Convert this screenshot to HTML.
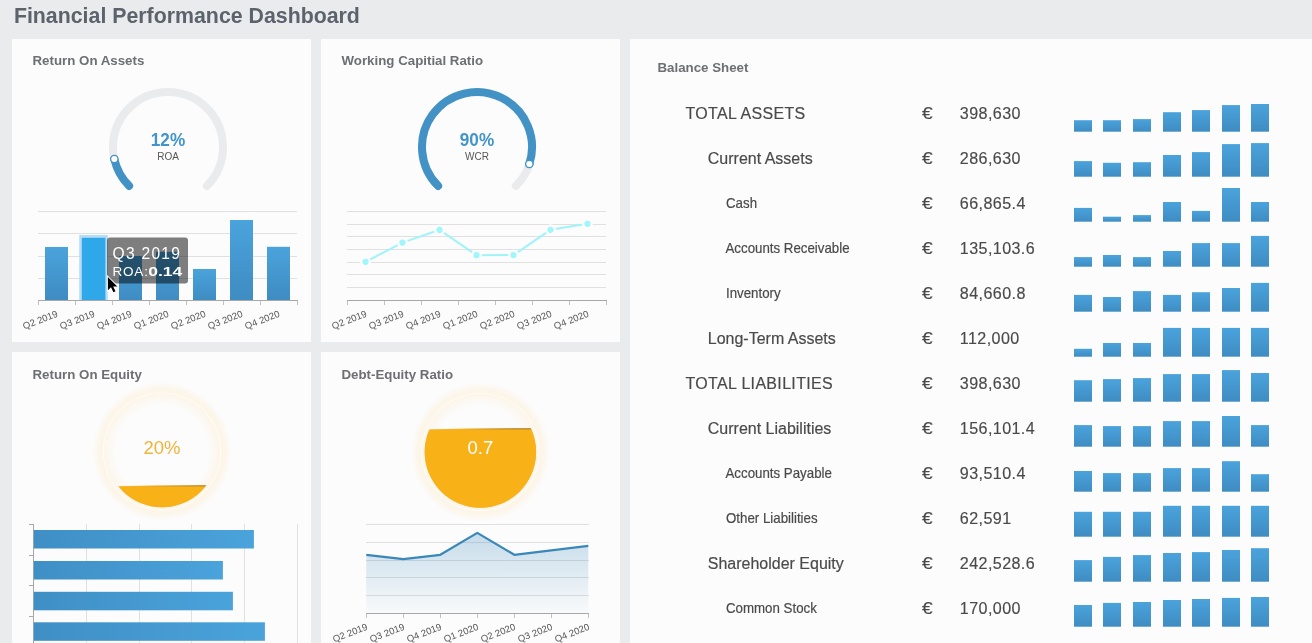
<!DOCTYPE html><html><head><meta charset="utf-8"><style>
html,body{margin:0;padding:0;width:1312px;height:643px;overflow:hidden;background:#eaebed;}
svg{position:absolute;left:0;top:0;will-change:transform;}
text{font-family:"Liberation Sans",sans-serif;}
</style></head><body>
<svg width="1312" height="643" viewBox="0 0 1312 643">
<defs>
<linearGradient id="gv" x1="0" y1="0" x2="0" y2="1"><stop offset="0" stop-color="#4ba3dc"/><stop offset="1" stop-color="#3e8cc2"/></linearGradient>
<linearGradient id="gh" x1="0" y1="0" x2="1" y2="0"><stop offset="0" stop-color="#3f8fc5"/><stop offset="1" stop-color="#4aa3db"/></linearGradient>
<linearGradient id="garea" x1="0" y1="0" x2="0" y2="1"><stop offset="0" stop-color="#3a87b9" stop-opacity="0.28"/><stop offset="1" stop-color="#3a87b9" stop-opacity="0.02"/></linearGradient>
<filter id="blur2" x="-20%" y="-20%" width="140%" height="140%"><feGaussianBlur stdDeviation="2"/></filter>
</defs>

<text x="13.9" y="22.9" font-size="21.8" font-weight="bold" fill="#5c636d" textLength="346" lengthAdjust="spacingAndGlyphs">Financial Performance Dashboard</text>
<rect x="12" y="39" width="299" height="303" fill="#fcfcfc"/>
<rect x="321" y="39" width="299" height="303" fill="#fcfcfc"/>
<rect x="12" y="352" width="299" height="300" fill="#fcfcfc"/>
<rect x="321" y="352" width="299" height="300" fill="#fcfcfc"/>
<rect x="630" y="39" width="700" height="620" fill="#fcfcfc"/>
<text x="32.5" y="64.8" font-size="13.3" font-weight="bold" fill="#6e6f73">Return On Assets</text>
<text x="341.5" y="65.3" font-size="13.3" font-weight="bold" fill="#6e6f73">Working Capitial Ratio</text>
<text x="32.5" y="379" font-size="13.3" font-weight="bold" fill="#6e6f73">Return On Equity</text>
<text x="341.5" y="379" font-size="13.3" font-weight="bold" fill="#6e6f73">Debt-Equity Ratio</text>
<text x="657.5" y="72" font-size="13.3" font-weight="bold" fill="#6e6f73">Balance Sheet</text>
<path d="M129.11,185.89 A55,55 0 1 1 206.89,185.89" fill="none" stroke="#eaebed" stroke-width="8" stroke-linecap="round"/>
<path d="M129.11,185.89 A55,55 0 0 1 114.32,159.00" fill="none" stroke="#4292c6" stroke-width="8" stroke-linecap="round"/>
<circle cx="114.32" cy="159.00" r="3.7" fill="#fff" stroke="#4292c6" stroke-width="1.3"/>
<text x="168" y="145.8" font-size="17.6" font-weight="bold" fill="#4394c9" text-anchor="middle" textLength="34.4" lengthAdjust="spacingAndGlyphs">12%</text>
<text x="168" y="159.5" font-size="10" fill="#555" text-anchor="middle">ROA</text>
<path d="M438.11,185.89 A55,55 0 1 1 515.89,185.89" fill="none" stroke="#eaebed" stroke-width="8" stroke-linecap="round"/>
<path d="M438.11,185.89 A55,55 0 1 1 529.31,164.00" fill="none" stroke="#4292c6" stroke-width="8" stroke-linecap="round"/>
<circle cx="529.31" cy="164.00" r="3.7" fill="#fff" stroke="#4292c6" stroke-width="1.3"/>
<text x="477" y="145.8" font-size="17.6" font-weight="bold" fill="#4394c9" text-anchor="middle" textLength="34.4" lengthAdjust="spacingAndGlyphs">90%</text>
<text x="477" y="159.5" font-size="10" fill="#555" text-anchor="middle">WCR</text>
<line x1="38" x2="297" y1="211.5" y2="211.5" stroke="#e0e0e0" stroke-width="1"/>
<line x1="38" x2="297" y1="233.5" y2="233.5" stroke="#e0e0e0" stroke-width="1"/>
<line x1="38" x2="297" y1="256.5" y2="256.5" stroke="#e0e0e0" stroke-width="1"/>
<line x1="38" x2="297" y1="278.5" y2="278.5" stroke="#e0e0e0" stroke-width="1"/>
<line x1="38" x2="298" y1="300.5" y2="300.5" stroke="#a8a8a8" stroke-width="1"/>
<line x1="38.5" x2="38.5" y1="301" y2="305" stroke="#c2c2c2" stroke-width="1"/>
<line x1="75.5" x2="75.5" y1="301" y2="305" stroke="#c2c2c2" stroke-width="1"/>
<line x1="112.5" x2="112.5" y1="301" y2="305" stroke="#c2c2c2" stroke-width="1"/>
<line x1="149.5" x2="149.5" y1="301" y2="305" stroke="#c2c2c2" stroke-width="1"/>
<line x1="186.5" x2="186.5" y1="301" y2="305" stroke="#c2c2c2" stroke-width="1"/>
<line x1="223.5" x2="223.5" y1="301" y2="305" stroke="#c2c2c2" stroke-width="1"/>
<line x1="260.5" x2="260.5" y1="301" y2="305" stroke="#c2c2c2" stroke-width="1"/>
<line x1="297.5" x2="297.5" y1="301" y2="305" stroke="#c2c2c2" stroke-width="1"/>
<rect x="45" y="247" width="23" height="53" fill="url(#gv)"/>
<rect x="79.2" y="235" width="28.6" height="65" fill="#b6ddf5"/>
<rect x="81.8" y="237.8" width="23.6" height="62.19999999999999" fill="#2fa8ea"/>
<rect x="119" y="256" width="23" height="44" fill="url(#gv)"/>
<rect x="156" y="251.8" width="23" height="48.19999999999999" fill="url(#gv)"/>
<rect x="193" y="269" width="23" height="31" fill="url(#gv)"/>
<rect x="230" y="220" width="23" height="80" fill="url(#gv)"/>
<rect x="267" y="246.8" width="23" height="53.19999999999999" fill="url(#gv)"/>
<text x="0" y="0" font-size="9.5" fill="#555" text-anchor="end" transform="translate(56.0,310.1) rotate(-21)" dy="0.7em">Q2 2019</text>
<text x="0" y="0" font-size="9.5" fill="#555" text-anchor="end" transform="translate(93.0,310.1) rotate(-21)" dy="0.7em">Q3 2019</text>
<text x="0" y="0" font-size="9.5" fill="#555" text-anchor="end" transform="translate(130.0,310.1) rotate(-21)" dy="0.7em">Q4 2019</text>
<text x="0" y="0" font-size="9.5" fill="#555" text-anchor="end" transform="translate(167.0,310.1) rotate(-21)" dy="0.7em">Q1 2020</text>
<text x="0" y="0" font-size="9.5" fill="#555" text-anchor="end" transform="translate(204.0,310.1) rotate(-21)" dy="0.7em">Q2 2020</text>
<text x="0" y="0" font-size="9.5" fill="#555" text-anchor="end" transform="translate(241.0,310.1) rotate(-21)" dy="0.7em">Q3 2020</text>
<text x="0" y="0" font-size="9.5" fill="#555" text-anchor="end" transform="translate(278.0,310.1) rotate(-21)" dy="0.7em">Q4 2020</text>
<line x1="347" x2="606" y1="211.5" y2="211.5" stroke="#e0e0e0" stroke-width="1"/>
<line x1="347" x2="606" y1="224.5" y2="224.5" stroke="#e0e0e0" stroke-width="1"/>
<line x1="347" x2="606" y1="236.5" y2="236.5" stroke="#e0e0e0" stroke-width="1"/>
<line x1="347" x2="606" y1="249.5" y2="249.5" stroke="#e0e0e0" stroke-width="1"/>
<line x1="347" x2="606" y1="262.5" y2="262.5" stroke="#e0e0e0" stroke-width="1"/>
<line x1="347" x2="606" y1="274.5" y2="274.5" stroke="#e0e0e0" stroke-width="1"/>
<line x1="347" x2="606" y1="287.5" y2="287.5" stroke="#e0e0e0" stroke-width="1"/>
<line x1="347" x2="607" y1="300.5" y2="300.5" stroke="#a8a8a8" stroke-width="1"/>
<line x1="347.5" x2="347.5" y1="301" y2="305" stroke="#c2c2c2" stroke-width="1"/>
<line x1="384.5" x2="384.5" y1="301" y2="305" stroke="#c2c2c2" stroke-width="1"/>
<line x1="421.5" x2="421.5" y1="301" y2="305" stroke="#c2c2c2" stroke-width="1"/>
<line x1="458.5" x2="458.5" y1="301" y2="305" stroke="#c2c2c2" stroke-width="1"/>
<line x1="495.5" x2="495.5" y1="301" y2="305" stroke="#c2c2c2" stroke-width="1"/>
<line x1="532.5" x2="532.5" y1="301" y2="305" stroke="#c2c2c2" stroke-width="1"/>
<line x1="569.5" x2="569.5" y1="301" y2="305" stroke="#c2c2c2" stroke-width="1"/>
<line x1="606.5" x2="606.5" y1="301" y2="305" stroke="#c2c2c2" stroke-width="1"/>
<polyline points="365.5,261.8 402.5,242.6 439.5,229.9 476.5,255.2 513.5,255.1 550.5,229.8 587.5,223.8" fill="none" stroke="#a0f3f9" stroke-width="2"/>
<circle cx="365.5" cy="261.8" r="4.3" fill="#9ff6fb" stroke="#fcfcfc" stroke-width="2.4"/>
<circle cx="402.5" cy="242.6" r="4.3" fill="#9ff6fb" stroke="#fcfcfc" stroke-width="2.4"/>
<circle cx="439.5" cy="229.9" r="4.3" fill="#9ff6fb" stroke="#fcfcfc" stroke-width="2.4"/>
<circle cx="476.5" cy="255.2" r="4.3" fill="#9ff6fb" stroke="#fcfcfc" stroke-width="2.4"/>
<circle cx="513.5" cy="255.1" r="4.3" fill="#9ff6fb" stroke="#fcfcfc" stroke-width="2.4"/>
<circle cx="550.5" cy="229.8" r="4.3" fill="#9ff6fb" stroke="#fcfcfc" stroke-width="2.4"/>
<circle cx="587.5" cy="223.8" r="4.3" fill="#9ff6fb" stroke="#fcfcfc" stroke-width="2.4"/>
<text x="0" y="0" font-size="9.5" fill="#555" text-anchor="end" transform="translate(365.0,310.1) rotate(-21)" dy="0.7em">Q2 2019</text>
<text x="0" y="0" font-size="9.5" fill="#555" text-anchor="end" transform="translate(402.0,310.1) rotate(-21)" dy="0.7em">Q3 2019</text>
<text x="0" y="0" font-size="9.5" fill="#555" text-anchor="end" transform="translate(439.0,310.1) rotate(-21)" dy="0.7em">Q4 2019</text>
<text x="0" y="0" font-size="9.5" fill="#555" text-anchor="end" transform="translate(476.0,310.1) rotate(-21)" dy="0.7em">Q1 2020</text>
<text x="0" y="0" font-size="9.5" fill="#555" text-anchor="end" transform="translate(513.0,310.1) rotate(-21)" dy="0.7em">Q2 2020</text>
<text x="0" y="0" font-size="9.5" fill="#555" text-anchor="end" transform="translate(550.0,310.1) rotate(-21)" dy="0.7em">Q3 2020</text>
<text x="0" y="0" font-size="9.5" fill="#555" text-anchor="end" transform="translate(587.0,310.1) rotate(-21)" dy="0.7em">Q4 2020</text>
<radialGradient id="rg162" cx="162" cy="451.5" r="70" gradientUnits="userSpaceOnUse"><stop offset="0.66" stop-color="#fde9c8" stop-opacity="0"/><stop offset="0.76" stop-color="#fde9c8" stop-opacity="0.2"/><stop offset="0.815" stop-color="#fde9c8" stop-opacity="0.32"/><stop offset="0.838" stop-color="#fffdf8" stop-opacity="1"/><stop offset="0.86" stop-color="#fde9c8" stop-opacity="0.36"/><stop offset="0.9" stop-color="#fde9c8" stop-opacity="0.34"/><stop offset="0.99" stop-color="#fde9c8" stop-opacity="0"/></radialGradient>
<circle cx="162" cy="451.5" r="70" fill="url(#rg162)"/>
<clipPath id="c162"><circle cx="162" cy="451.5" r="55.7"/></clipPath>
<g clip-path="url(#c162)"><path d="M102,486.6 Q162,485 222,485.4 L222,511.5 L102,511.5 Z" fill="#f5ac1d" opacity="0.9"/>
<path d="M102,487.1 Q162,486 222,485.9 L222,511.5 L102,511.5 Z" fill="#f8b117"/></g>
<linearGradient id="wl162" x1="142" x2="218" y1="0" y2="0" gradientUnits="userSpaceOnUse"><stop offset="0" stop-color="#a87a30" stop-opacity="0"/><stop offset="1" stop-color="#a87a30" stop-opacity="0.8"/></linearGradient>
<path d="M142,486.6 Q182,485.7 220,485.8" fill="none" stroke="url(#wl162)" stroke-width="1.6" clip-path="url(#c162)"/>
<text x="162" y="453.7" font-size="18.5" fill="#f2b33a" text-anchor="middle">20%</text>
<radialGradient id="rg480" cx="480.4" cy="452" r="70" gradientUnits="userSpaceOnUse"><stop offset="0.66" stop-color="#fde9c8" stop-opacity="0"/><stop offset="0.76" stop-color="#fde9c8" stop-opacity="0.2"/><stop offset="0.815" stop-color="#fde9c8" stop-opacity="0.32"/><stop offset="0.838" stop-color="#fffdf8" stop-opacity="1"/><stop offset="0.86" stop-color="#fde9c8" stop-opacity="0.36"/><stop offset="0.9" stop-color="#fde9c8" stop-opacity="0.34"/><stop offset="0.99" stop-color="#fde9c8" stop-opacity="0"/></radialGradient>
<circle cx="480.4" cy="452" r="70" fill="url(#rg480)"/>
<clipPath id="c480.4"><circle cx="480.4" cy="452" r="55.7"/></clipPath>
<g clip-path="url(#c480.4)"><path d="M420.4,429.6 Q480.4,428 540.4,428.4 L540.4,512 L420.4,512 Z" fill="#f5ac1d" opacity="0.9"/>
<path d="M420.4,430.1 Q480.4,429 540.4,428.9 L540.4,512 L420.4,512 Z" fill="#f8b117"/></g>
<linearGradient id="wl480" x1="460.4" x2="536.4" y1="0" y2="0" gradientUnits="userSpaceOnUse"><stop offset="0" stop-color="#a87a30" stop-opacity="0"/><stop offset="1" stop-color="#a87a30" stop-opacity="0.8"/></linearGradient>
<path d="M460.4,429.6 Q500.4,428.7 538.4,428.8" fill="none" stroke="url(#wl480)" stroke-width="1.6" clip-path="url(#c480.4)"/>
<text x="480.4" y="453.7" font-size="18.5" fill="#ffffff" text-anchor="middle">0.7</text>
<line x1="86.5" x2="86.5" y1="524" y2="643" stroke="#e0e0e0" stroke-width="1"/>
<line x1="139.5" x2="139.5" y1="524" y2="643" stroke="#e0e0e0" stroke-width="1"/>
<line x1="191.5" x2="191.5" y1="524" y2="643" stroke="#e0e0e0" stroke-width="1"/>
<line x1="244.5" x2="244.5" y1="524" y2="643" stroke="#e0e0e0" stroke-width="1"/>
<line x1="297.5" x2="297.5" y1="524" y2="643" stroke="#e0e0e0" stroke-width="1"/>
<line x1="33.5" x2="33.5" y1="524" y2="643" stroke="#a8a8a8" stroke-width="1"/>
<line x1="29" x2="34" y1="524.5" y2="524.5" stroke="#a8a8a8" stroke-width="1"/>
<line x1="29" x2="34" y1="555.5" y2="555.5" stroke="#a8a8a8" stroke-width="1"/>
<line x1="29" x2="34" y1="585.5" y2="585.5" stroke="#a8a8a8" stroke-width="1"/>
<line x1="29" x2="34" y1="616.5" y2="616.5" stroke="#a8a8a8" stroke-width="1"/>
<rect x="33.8" y="530" width="220.10000000000002" height="18.5" fill="url(#gh)"/>
<rect x="33.8" y="561" width="189.10000000000002" height="18.5" fill="url(#gh)"/>
<rect x="33.8" y="591.8" width="199.10000000000002" height="18.5" fill="url(#gh)"/>
<rect x="33.8" y="622.3" width="231.09999999999997" height="18.5" fill="url(#gh)"/>
<line x1="366" x2="589" y1="524.5" y2="524.5" stroke="#e0e0e0" stroke-width="1"/>
<line x1="366" x2="589" y1="542.5" y2="542.5" stroke="#e0e0e0" stroke-width="1"/>
<line x1="366" x2="589" y1="560.5" y2="560.5" stroke="#e0e0e0" stroke-width="1"/>
<line x1="366" x2="589" y1="577.5" y2="577.5" stroke="#e0e0e0" stroke-width="1"/>
<line x1="366" x2="589" y1="595.5" y2="595.5" stroke="#e0e0e0" stroke-width="1"/>
<line x1="366" x2="589" y1="613.5" y2="613.5" stroke="#a8a8a8" stroke-width="1"/>
<line x1="366.5" x2="366.5" y1="614" y2="618" stroke="#c2c2c2" stroke-width="1"/>
<line x1="403.5" x2="403.5" y1="614" y2="618" stroke="#c2c2c2" stroke-width="1"/>
<line x1="440.5" x2="440.5" y1="614" y2="618" stroke="#c2c2c2" stroke-width="1"/>
<line x1="477.5" x2="477.5" y1="614" y2="618" stroke="#c2c2c2" stroke-width="1"/>
<line x1="514.5" x2="514.5" y1="614" y2="618" stroke="#c2c2c2" stroke-width="1"/>
<line x1="551.5" x2="551.5" y1="614" y2="618" stroke="#c2c2c2" stroke-width="1"/>
<line x1="588.5" x2="588.5" y1="614" y2="618" stroke="#c2c2c2" stroke-width="1"/>
<path d="M366.3,554.8 L403.3,559.2 L440.3,554.8 L477.3,532.9 L514.3,554.8 L551.3,550.4 L588.3,545.9 L588.3,613 L366.3,613 Z" fill="url(#garea)"/>
<polyline points="366.3,554.8 403.3,559.2 440.3,554.8 477.3,532.9 514.3,554.8 551.3,550.4 588.3,545.9" fill="none" stroke="#3a87b9" stroke-width="2.2" stroke-linejoin="round"/>
<text x="0" y="0" font-size="9.5" fill="#555" text-anchor="end" transform="translate(365.8,623.1) rotate(-21)" dy="0.7em">Q2 2019</text>
<text x="0" y="0" font-size="9.5" fill="#555" text-anchor="end" transform="translate(402.8,623.1) rotate(-21)" dy="0.7em">Q3 2019</text>
<text x="0" y="0" font-size="9.5" fill="#555" text-anchor="end" transform="translate(439.8,623.1) rotate(-21)" dy="0.7em">Q4 2019</text>
<text x="0" y="0" font-size="9.5" fill="#555" text-anchor="end" transform="translate(476.8,623.1) rotate(-21)" dy="0.7em">Q1 2020</text>
<text x="0" y="0" font-size="9.5" fill="#555" text-anchor="end" transform="translate(513.8,623.1) rotate(-21)" dy="0.7em">Q2 2020</text>
<text x="0" y="0" font-size="9.5" fill="#555" text-anchor="end" transform="translate(550.8,623.1) rotate(-21)" dy="0.7em">Q3 2020</text>
<text x="0" y="0" font-size="9.5" fill="#555" text-anchor="end" transform="translate(587.8,623.1) rotate(-21)" dy="0.7em">Q4 2020</text>
<rect x="107" y="237.5" width="81" height="46" rx="3" fill="rgba(0,0,0,0.5)"/>
<text x="112.5" y="258.8" font-size="15.6" fill="#fff" textLength="67.5" lengthAdjust="spacing">Q3 2019</text>
<text x="112.5" y="275.7" font-size="13.5" fill="#fff" textLength="35.4" lengthAdjust="spacing">ROA:</text>
<text x="148.2" y="275.7" font-size="13.6" font-weight="bold" fill="#fff" textLength="34.2" lengthAdjust="spacingAndGlyphs">0.14</text>
<path d="M107.90,277.00 L107.90,290.20 L111.00,287.20 L113.40,292.20 L115.50,291.30 L113.20,286.50 L117.30,286.50 Z" fill="#000" stroke="#fff" stroke-width="1.7" stroke-linejoin="miter" paint-order="stroke"/>
<text x="0" y="0" font-size="16" fill="#4a4a4a" stroke="#4a4a4a" stroke-width="0.18" letter-spacing="0.33" transform="translate(685.5,119.0) scale(1,1.04)">TOTAL ASSETS</text>
<text x="0" y="0" font-size="16" fill="#4a4a4a" stroke="#4a4a4a" stroke-width="0.15" transform="translate(922,118.6) scale(1.2,1)">€</text>
<text x="0" y="0" font-size="16.1" fill="#4a4a4a" stroke="#4a4a4a" stroke-width="0.15" letter-spacing="0.42" transform="translate(959.8,118.6) scale(1,1.04)">398,630</text>
<rect x="1074" y="120.2" width="18" height="11.5" fill="url(#gv)"/>
<rect x="1103" y="120.2" width="18" height="11.5" fill="url(#gv)"/>
<rect x="1133" y="119.1" width="18" height="12.6" fill="url(#gv)"/>
<rect x="1163" y="112.2" width="18" height="19.5" fill="url(#gv)"/>
<rect x="1192" y="110.1" width="18" height="21.6" fill="url(#gv)"/>
<rect x="1222" y="105.1" width="18" height="26.6" fill="url(#gv)"/>
<rect x="1251" y="104" width="18" height="27.7" fill="url(#gv)"/>
<text x="0" y="0" font-size="16" fill="#4a4a4a" stroke="#4a4a4a" stroke-width="0.18" transform="translate(707.8,164.0) scale(1,1.04)">Current Assets</text>
<text x="0" y="0" font-size="16" fill="#4a4a4a" stroke="#4a4a4a" stroke-width="0.15" transform="translate(922,163.6) scale(1.2,1)">€</text>
<text x="0" y="0" font-size="16.1" fill="#4a4a4a" stroke="#4a4a4a" stroke-width="0.15" letter-spacing="0.42" transform="translate(959.8,163.6) scale(1,1.04)">286,630</text>
<rect x="1074" y="161.1" width="18" height="15.6" fill="url(#gv)"/>
<rect x="1103" y="162.8" width="18" height="13.9" fill="url(#gv)"/>
<rect x="1133" y="162.2" width="18" height="14.5" fill="url(#gv)"/>
<rect x="1163" y="155" width="18" height="21.7" fill="url(#gv)"/>
<rect x="1192" y="152.1" width="18" height="24.6" fill="url(#gv)"/>
<rect x="1222" y="144.1" width="18" height="32.6" fill="url(#gv)"/>
<rect x="1251" y="143.1" width="18" height="33.6" fill="url(#gv)"/>
<text x="0" y="0" font-size="13.3" fill="#4a4a4a" stroke="#4a4a4a" stroke-width="0.18" transform="translate(726,208.0) scale(1,1.08)">Cash</text>
<text x="0" y="0" font-size="16" fill="#4a4a4a" stroke="#4a4a4a" stroke-width="0.15" transform="translate(922,208.6) scale(1.2,1)">€</text>
<text x="0" y="0" font-size="16.1" fill="#4a4a4a" stroke="#4a4a4a" stroke-width="0.15" letter-spacing="0.42" transform="translate(959.8,208.6) scale(1,1.04)">66,865.4</text>
<rect x="1074" y="207.9" width="18" height="13.8" fill="url(#gv)"/>
<rect x="1103" y="216.7" width="18" height="5.0" fill="url(#gv)"/>
<rect x="1133" y="215.1" width="18" height="6.6" fill="url(#gv)"/>
<rect x="1163" y="202" width="18" height="19.7" fill="url(#gv)"/>
<rect x="1192" y="210.9" width="18" height="10.8" fill="url(#gv)"/>
<rect x="1222" y="188" width="18" height="33.7" fill="url(#gv)"/>
<rect x="1251" y="202" width="18" height="19.7" fill="url(#gv)"/>
<text x="0" y="0" font-size="13.3" fill="#4a4a4a" stroke="#4a4a4a" stroke-width="0.18" transform="translate(725.5,253.0) scale(1,1.08)">Accounts Receivable</text>
<text x="0" y="0" font-size="16" fill="#4a4a4a" stroke="#4a4a4a" stroke-width="0.15" transform="translate(922,253.6) scale(1.2,1)">€</text>
<text x="0" y="0" font-size="16.1" fill="#4a4a4a" stroke="#4a4a4a" stroke-width="0.15" letter-spacing="0.42" transform="translate(959.8,253.6) scale(1,1.04)">135,103.6</text>
<rect x="1074" y="257.1" width="18" height="9.6" fill="url(#gv)"/>
<rect x="1103" y="255" width="18" height="11.7" fill="url(#gv)"/>
<rect x="1133" y="257.1" width="18" height="9.6" fill="url(#gv)"/>
<rect x="1163" y="251" width="18" height="15.7" fill="url(#gv)"/>
<rect x="1192" y="243.1" width="18" height="23.6" fill="url(#gv)"/>
<rect x="1222" y="243.1" width="18" height="23.6" fill="url(#gv)"/>
<rect x="1251" y="235.9" width="18" height="30.8" fill="url(#gv)"/>
<text x="0" y="0" font-size="13.3" fill="#4a4a4a" stroke="#4a4a4a" stroke-width="0.18" transform="translate(726,298.0) scale(1,1.08)">Inventory</text>
<text x="0" y="0" font-size="16" fill="#4a4a4a" stroke="#4a4a4a" stroke-width="0.15" transform="translate(922,298.6) scale(1.2,1)">€</text>
<text x="0" y="0" font-size="16.1" fill="#4a4a4a" stroke="#4a4a4a" stroke-width="0.15" letter-spacing="0.42" transform="translate(959.8,298.6) scale(1,1.04)">84,660.8</text>
<rect x="1074" y="294.9" width="18" height="16.8" fill="url(#gv)"/>
<rect x="1103" y="297" width="18" height="14.7" fill="url(#gv)"/>
<rect x="1133" y="291.1" width="18" height="20.6" fill="url(#gv)"/>
<rect x="1163" y="294.9" width="18" height="16.8" fill="url(#gv)"/>
<rect x="1192" y="292.2" width="18" height="19.5" fill="url(#gv)"/>
<rect x="1222" y="288" width="18" height="23.7" fill="url(#gv)"/>
<rect x="1251" y="282.9" width="18" height="28.8" fill="url(#gv)"/>
<text x="0" y="0" font-size="16" fill="#4a4a4a" stroke="#4a4a4a" stroke-width="0.18" transform="translate(707.8,344.0) scale(1,1.04)">Long-Term Assets</text>
<text x="0" y="0" font-size="16" fill="#4a4a4a" stroke="#4a4a4a" stroke-width="0.15" transform="translate(922,343.6) scale(1.2,1)">€</text>
<text x="0" y="0" font-size="16.1" fill="#4a4a4a" stroke="#4a4a4a" stroke-width="0.15" letter-spacing="0.42" transform="translate(959.8,343.6) scale(1,1.04)">112,000</text>
<rect x="1074" y="348.8" width="18" height="7.9" fill="url(#gv)"/>
<rect x="1103" y="343" width="18" height="13.7" fill="url(#gv)"/>
<rect x="1133" y="343" width="18" height="13.7" fill="url(#gv)"/>
<rect x="1163" y="327.9" width="18" height="28.8" fill="url(#gv)"/>
<rect x="1192" y="327.9" width="18" height="28.8" fill="url(#gv)"/>
<rect x="1222" y="327.9" width="18" height="28.8" fill="url(#gv)"/>
<rect x="1251" y="327.9" width="18" height="28.8" fill="url(#gv)"/>
<text x="0" y="0" font-size="16" fill="#4a4a4a" stroke="#4a4a4a" stroke-width="0.18" letter-spacing="0.33" transform="translate(685.5,389.0) scale(1,1.04)">TOTAL LIABILITIES</text>
<text x="0" y="0" font-size="16" fill="#4a4a4a" stroke="#4a4a4a" stroke-width="0.15" transform="translate(922,388.6) scale(1.2,1)">€</text>
<text x="0" y="0" font-size="16.1" fill="#4a4a4a" stroke="#4a4a4a" stroke-width="0.15" letter-spacing="0.42" transform="translate(959.8,388.6) scale(1,1.04)">398,630</text>
<rect x="1074" y="380.2" width="18" height="21.5" fill="url(#gv)"/>
<rect x="1103" y="379.1" width="18" height="22.6" fill="url(#gv)"/>
<rect x="1133" y="378.1" width="18" height="23.6" fill="url(#gv)"/>
<rect x="1163" y="374.1" width="18" height="27.6" fill="url(#gv)"/>
<rect x="1192" y="374.1" width="18" height="27.6" fill="url(#gv)"/>
<rect x="1222" y="370.1" width="18" height="31.6" fill="url(#gv)"/>
<rect x="1251" y="373" width="18" height="28.7" fill="url(#gv)"/>
<text x="0" y="0" font-size="16" fill="#4a4a4a" stroke="#4a4a4a" stroke-width="0.18" transform="translate(707.8,434.0) scale(1,1.04)">Current Liabilities</text>
<text x="0" y="0" font-size="16" fill="#4a4a4a" stroke="#4a4a4a" stroke-width="0.15" transform="translate(922,433.6) scale(1.2,1)">€</text>
<text x="0" y="0" font-size="16.1" fill="#4a4a4a" stroke="#4a4a4a" stroke-width="0.15" letter-spacing="0.42" transform="translate(959.8,433.6) scale(1,1.04)">156,101.4</text>
<rect x="1074" y="425.1" width="18" height="21.6" fill="url(#gv)"/>
<rect x="1103" y="426.1" width="18" height="20.6" fill="url(#gv)"/>
<rect x="1133" y="426.1" width="18" height="20.6" fill="url(#gv)"/>
<rect x="1163" y="421.1" width="18" height="25.6" fill="url(#gv)"/>
<rect x="1192" y="421.1" width="18" height="25.6" fill="url(#gv)"/>
<rect x="1222" y="416" width="18" height="30.7" fill="url(#gv)"/>
<rect x="1251" y="425.1" width="18" height="21.6" fill="url(#gv)"/>
<text x="0" y="0" font-size="13.3" fill="#4a4a4a" stroke="#4a4a4a" stroke-width="0.18" transform="translate(725.5,478.0) scale(1,1.08)">Accounts Payable</text>
<text x="0" y="0" font-size="16" fill="#4a4a4a" stroke="#4a4a4a" stroke-width="0.15" transform="translate(922,478.6) scale(1.2,1)">€</text>
<text x="0" y="0" font-size="16.1" fill="#4a4a4a" stroke="#4a4a4a" stroke-width="0.15" letter-spacing="0.42" transform="translate(959.8,478.6) scale(1,1.04)">93,510.4</text>
<rect x="1074" y="471" width="18" height="20.7" fill="url(#gv)"/>
<rect x="1103" y="473.1" width="18" height="18.6" fill="url(#gv)"/>
<rect x="1133" y="473.1" width="18" height="18.6" fill="url(#gv)"/>
<rect x="1163" y="468.1" width="18" height="23.6" fill="url(#gv)"/>
<rect x="1192" y="468.1" width="18" height="23.6" fill="url(#gv)"/>
<rect x="1222" y="461.2" width="18" height="30.5" fill="url(#gv)"/>
<rect x="1251" y="474.2" width="18" height="17.5" fill="url(#gv)"/>
<text x="0" y="0" font-size="13.3" fill="#4a4a4a" stroke="#4a4a4a" stroke-width="0.18" transform="translate(726,523.0) scale(1,1.08)">Other Liabilities</text>
<text x="0" y="0" font-size="16" fill="#4a4a4a" stroke="#4a4a4a" stroke-width="0.15" transform="translate(922,523.6) scale(1.2,1)">€</text>
<text x="0" y="0" font-size="16.1" fill="#4a4a4a" stroke="#4a4a4a" stroke-width="0.15" letter-spacing="0.42" transform="translate(959.8,523.6) scale(1,1.04)">62,591</text>
<rect x="1074" y="511.8" width="18" height="24.9" fill="url(#gv)"/>
<rect x="1103" y="511.8" width="18" height="24.9" fill="url(#gv)"/>
<rect x="1133" y="511.8" width="18" height="24.9" fill="url(#gv)"/>
<rect x="1163" y="505.8" width="18" height="30.9" fill="url(#gv)"/>
<rect x="1192" y="505.8" width="18" height="30.9" fill="url(#gv)"/>
<rect x="1222" y="505.8" width="18" height="30.9" fill="url(#gv)"/>
<rect x="1251" y="505.8" width="18" height="30.9" fill="url(#gv)"/>
<text x="0" y="0" font-size="16" fill="#4a4a4a" stroke="#4a4a4a" stroke-width="0.18" transform="translate(707.8,569.0) scale(1,1.04)">Shareholder Equity</text>
<text x="0" y="0" font-size="16" fill="#4a4a4a" stroke="#4a4a4a" stroke-width="0.15" transform="translate(922,568.6) scale(1.2,1)">€</text>
<text x="0" y="0" font-size="16.1" fill="#4a4a4a" stroke="#4a4a4a" stroke-width="0.15" letter-spacing="0.42" transform="translate(959.8,568.6) scale(1,1.04)">242,528.6</text>
<rect x="1074" y="560.1" width="18" height="21.6" fill="url(#gv)"/>
<rect x="1103" y="556.9" width="18" height="24.8" fill="url(#gv)"/>
<rect x="1133" y="555.1" width="18" height="26.6" fill="url(#gv)"/>
<rect x="1163" y="553" width="18" height="28.7" fill="url(#gv)"/>
<rect x="1192" y="552.1" width="18" height="29.6" fill="url(#gv)"/>
<rect x="1222" y="550" width="18" height="31.7" fill="url(#gv)"/>
<rect x="1251" y="548.2" width="18" height="33.5" fill="url(#gv)"/>
<text x="0" y="0" font-size="13.3" fill="#4a4a4a" stroke="#4a4a4a" stroke-width="0.18" transform="translate(726,613.0) scale(1,1.08)">Common Stock</text>
<text x="0" y="0" font-size="16" fill="#4a4a4a" stroke="#4a4a4a" stroke-width="0.15" transform="translate(922,613.6) scale(1.2,1)">€</text>
<text x="0" y="0" font-size="16.1" fill="#4a4a4a" stroke="#4a4a4a" stroke-width="0.15" letter-spacing="0.42" transform="translate(959.8,613.6) scale(1,1.04)">170,000</text>
<rect x="1074" y="605" width="18" height="21.7" fill="url(#gv)"/>
<rect x="1103" y="602.9" width="18" height="23.8" fill="url(#gv)"/>
<rect x="1133" y="602" width="18" height="24.7" fill="url(#gv)"/>
<rect x="1163" y="600" width="18" height="26.7" fill="url(#gv)"/>
<rect x="1192" y="599" width="18" height="27.7" fill="url(#gv)"/>
<rect x="1222" y="597.9" width="18" height="28.8" fill="url(#gv)"/>
<rect x="1251" y="597" width="18" height="29.7" fill="url(#gv)"/>
</svg></body></html>
